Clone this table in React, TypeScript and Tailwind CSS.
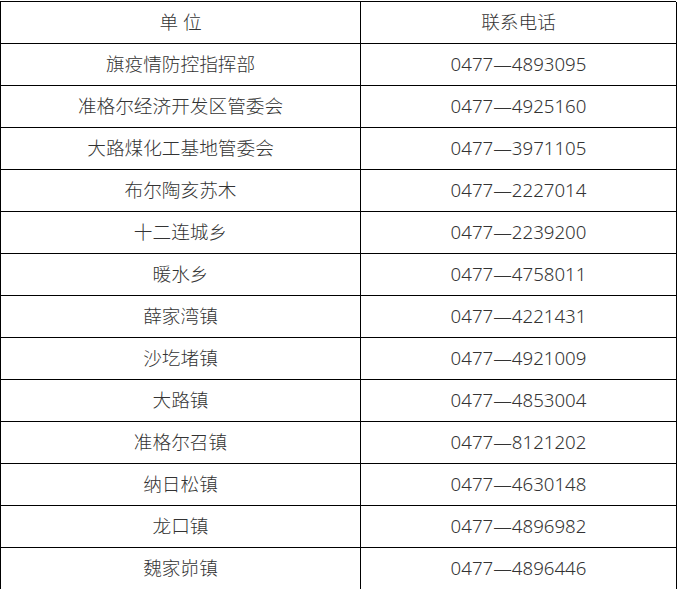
import React from 'react';

const ROWS: [string, string][] = [
    ['旗疫情防控指挥部', '0477—4893095'],
    ['准格尔经济开发区管委会', '0477—4925160'],
    ['大路煤化工基地管委会', '0477—3971105'],
    ['布尔陶亥苏木', '0477—2227014'],
    ['十二连城乡', '0477—2239200'],
    ['暖水乡', '0477—4758011'],
    ['薛家湾镇', '0477—4221431'],
    ['沙圪堵镇', '0477—4921009'],
    ['大路镇', '0477—4853004'],
    ['准格尔召镇', '0477—8121202'],
    ['纳日松镇', '0477—4630148'],
    ['龙口镇', '0477—4896982'],
    ['魏家峁镇', '0477—4896446'],
];

export default function App() {
    return (
        <div className="w-[679px] h-[589px] overflow-hidden bg-white pt-px">
            <div
                className="grid grid-cols-[360px_316px] w-[676px] border-l border-t border-black text-[#333] text-[18.67px] font-light"
                style={{ fontFamily: '"Noto Sans", "Noto Sans CJK SC", sans-serif' }}
            >
                <Cell>单 位</Cell>
                <Cell>联系电话</Cell>
                {ROWS.map(([unit, phone]) => (
                    <React.Fragment key={unit}>
                        <Cell>{unit}</Cell>
                        <Cell>{phone}</Cell>
                    </React.Fragment>
                ))}
            </div>
        </div>
    );
}

function Cell({ children }: { children: React.ReactNode }) {
    return (
        <div className="h-[42px] flex items-center justify-center border-r border-b border-black leading-none whitespace-pre">
            {children}
        </div>
    );
}
